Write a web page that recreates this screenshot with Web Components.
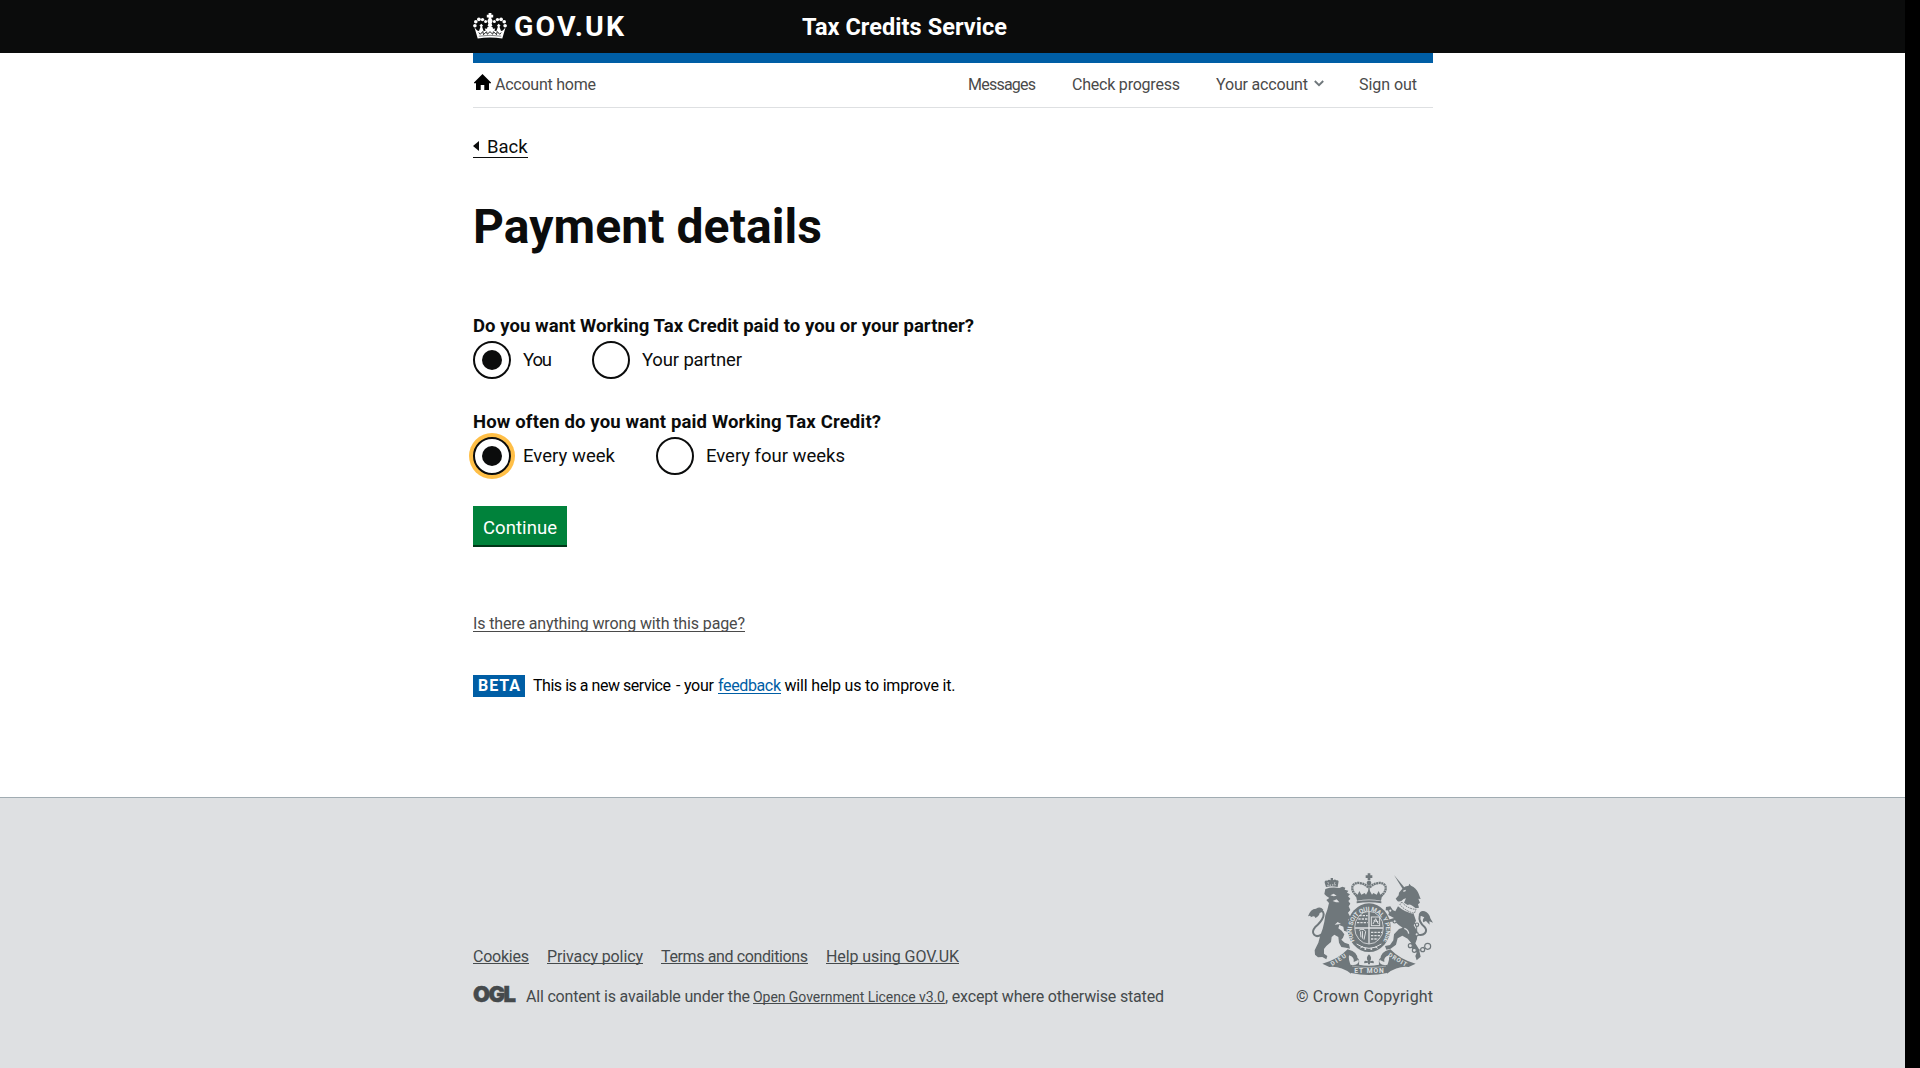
<!DOCTYPE html>
<html lang="en">
<head>
<meta charset="utf-8">
<title>Payment details</title>
<style>
html,body{margin:0;background:#000;height:1068px;overflow:hidden}
body{font-family:Roboto,"Liberation Sans",sans-serif;color:#0b0c0c;font-size:16px}
</style>
</head>
<body>
<tax-page></tax-page>
<script>
function define(name, markup) {
  const t = document.createElement('template');
  t.innerHTML = markup;
  customElements.define(name, class extends HTMLElement {
    constructor() {
      super();
      this.attachShadow({mode: 'open'}).append(t.content.cloneNode(true));
    }
  });
}

/* A run of text tracked to a set width (w), with an optional underline (u). */
customElements.define('tracked-text', class extends HTMLElement {
  constructor() {
    super();
    this.attachShadow({mode: 'open'}).innerHTML =
      `<style>:host{display:inline-block;white-space:pre;line-height:var(--lh,22px);height:20px;flex:none;position:relative}
       :host([u])::after{content:"";position:absolute;left:0;right:0;top:var(--u,17px);height:1px;background:currentColor}
       span{display:inline-block}</style><span><slot></slot></span>`;
  }
  connectedCallback() {
    requestAnimationFrame(() => this.fit());
    this.fit();
  }
  fit() {
    const s = this.shadowRoot.querySelector('span');
    const w = +this.getAttribute('w');
    const n = this.textContent.length;
    s.style.letterSpacing = '0';
    const natural = s.getBoundingClientRect().width;
    if (!natural || n < 2) return;
    s.style.letterSpacing = ((w - natural) / (n - 1)).toFixed(3) + 'px';
    this.style.width = w + 'px';
  }
});

define('crown-logo', `<style>:host{display:block;width:34px;height:26px;flex:none}svg{display:block}</style>
<svg width="34" height="26" viewBox="0 0 34 26" fill="#fff">
<path d="M15.6 0h2.8v1.8h1.8v2.6h-1.8V6h-2.8V4.4h-1.8V1.800h1.800z"/><circle cx="17" cy="8" r="2.500"/><path d="M15.800 9h2.400l1.200 4-2.400 1.500-2.400-1.500z"/>
<circle cx="12.600" cy="8.600" r="1.500"/><circle cx="9.500" cy="6.600" r="1.700"/><circle cx="5.900" cy="6.300" r="1.900"/><circle cx="2.800" cy="8.700" r="1.800"/><circle cx="1.900" cy="12.700" r="1.800"/>
<circle cx="21.400" cy="8.600" r="1.500"/><circle cx="24.500" cy="6.600" r="1.700"/><circle cx="28.100" cy="6.300" r="1.900"/><circle cx="31.200" cy="8.700" r="1.800"/><circle cx="32.100" cy="12.700" r="1.800"/>
<path d="M1.500 14.500l2.700 3 1.800.5 1.500-4.200-1-1.300 1.800-1.700 1.700 1.700-.9 1.300 1.600 4.500 2-.9-1-2 2.300.3.500-1.700h5l.5 1.700 2.300-.3-1 2 2 .9 1.600-4.500-.9-1.300 1.700-1.700 1.800 1.700-1 1.300L28 18l1.800-.5 2.700-3L29.300 25.500Q17 23.400 4.700 25.500z"/>
<path d="M5.800 19.500l1.500 1.800 2.500-2.800.7 3.200 3-3 .8 2.500 2.700-2.500 2.700 2.500.8-2.500 3 3 .7-3.200 2.500 2.800 1.500-1.800" fill="none" stroke="#0b0c0c" stroke-width=".9"/>
<path d="M5.800 23.200Q17 21.400 28.200 23.200" fill="none" stroke="#0b0c0c" stroke-width=".5"/>
</svg>`);

define('gov-header', `<style>
:host{display:block;background:#0b0c0c;height:53px;color:#fff;font-weight:700}
.row{width:960px;height:53px;margin:0 auto 0 473px;display:flex;align-items:flex-start}
crown-logo{margin:13px 0 0 0}
.gov{font-size:28.500px;margin:17px 0 0 7px}
.svc{font-size:23.500px;margin:17px 0 0 178px}
.row{--lh:20px}
</style><div class="row"><crown-logo></crown-logo><tracked-text class="gov" w="110">GOV.UK</tracked-text><tracked-text class="svc" w="205">Tax Credits Service</tracked-text></div>`);

define('account-nav', `<style>
:host{display:block;border-top:10px solid #005ea5;border-bottom:1px solid #dee0e2;height:44px;color:#4a4a4a}
nav{display:flex;height:44px;align-items:flex-start;padding-top:11px;box-sizing:border-box}
.home{margin:0 0 0 1px;flex:none}
.gap{flex:1}
.items{display:flex;padding-right:16px}
.chev{margin:6px 35px 0 6px;flex:none}
</style><nav><svg class="home" width="17" height="16" viewBox="0 0 17 16"><path fill="#000" d="M8.500 0L17 8.500v.7h-2V16h-4.700v-5H6.700v5H2V9.200H0v-.7z"/></svg>
<tracked-text style="margin-left:4px" w="101">Account home</tracked-text><div class="gap"></div>
<div class="items"><tracked-text w="68" style="margin-right:36px">Messages</tracked-text><tracked-text w="108" style="margin-right:36px">Check progress</tracked-text><tracked-text w="92">Your account</tracked-text><svg class="chev" width="10" height="7" viewBox="0 0 10 7"><path d="M.8 1L5 5.200 9.200 1" fill="none" stroke="#6f777b" stroke-width="1.900"/></svg><tracked-text w="58">Sign out</tracked-text></div></nav>`);

define('back-link', `<style>:host{display:flex;width:55px;height:20px;font-size:18.500px;border-bottom:1px solid #0b0c0c;--lh:20px}
svg{margin:4px 8px 0 0;flex:none}</style><svg width="6" height="10" viewBox="0 0 6 10"><path d="M0 5L6 0v10z" fill="#0b0c0c"/></svg><tracked-text w="41"><slot></slot></tracked-text>`);

define('radio-option', `<style>
:host{display:flex;height:38px;--lh:20px}
.c{width:38px;height:38px;box-sizing:border-box;border:2px solid #0b0c0c;border-radius:50%;background:#fff;display:flex;align-items:center;justify-content:center;flex:none}
.c i{display:none;width:20px;height:20px;border-radius:50%;background:#0b0c0c}
:host([checked]) .c i{display:block}
:host([focused]) .c{box-shadow:0 0 0 4px #ffbf47}
.l{margin:9px 0 0 12px;display:flex;padding-right:1px;font-size:18.500px}
</style><span class="c"><i></i></span><span class="l"><slot></slot></span>`);

define('radio-group', `<style>
:host{display:block}
.legend{display:flex;font-weight:700;font-size:18.500px;height:24px;--lh:18px}
.opts{display:flex;gap:var(--gap,40px)}
</style><div class="legend"><slot name="legend"></slot></div><div class="opts"><slot></slot></div>`);

define('submit-button', `<style>
:host{display:block;width:94px;height:41px;box-sizing:border-box;background:#00823b;border-bottom:2px solid #003618;color:#fff;font-size:18.500px;padding:11px 0 0 10px;--lh:20px}
</style><slot></slot>`);

define('beta-banner', `<style>
:host{display:flex;height:22px;color:#000;align-items:flex-start}
b{background:#005ea5;color:#fff;width:52px;height:22px;padding-left:5px;box-sizing:border-box;margin-right:8px}
.a{color:#005ea5;margin:0 3.500px 0 4px}
</style><b><tracked-text w="42">BETA</tracked-text></b><tracked-text w="138" style="margin-right:5px">This is a new service</tracked-text><tracked-text w="38">- your</tracked-text><tracked-text class="a" u w="63" style="--u:18px">feedback</tracked-text><tracked-text w="171">will help us to improve it.</tracked-text>`);

define('royal-crest', `<style>:host{display:block;width:125px;height:103px}svg{display:block;overflow:visible}</style>
<svg width="125" height="103" viewBox="84 38 375 309" fill="#6f777b">
<g id="crown"><path d="M263 39h8v6h6v8h-6v7h-8v-7h-6v-8h6z"/><circle cx="267" cy="68" r="7"/>
<path d="M265 70h4v40h-4z"/>
<path d="M231 108C205 84 219 66 238 68Q255 70 265 82M303 108C329 84 315 66 296 68Q279 70 269 82" fill="none" stroke="#6f777b" stroke-width="7" stroke-dasharray="6 1.500"/>
<path d="M226 97l7 6 5-11 6 11 10-5 4 5 9-16 9 16 4-5 10 5 6-11 5 11 7-6-5 24Q267 114 231 121z"/>
<path d="M230 123Q267 116 304 123v6Q267 123 230 129z"/></g>
<path d="M138 80l-4-13Q133 58 142 61Q146 56 152 60L152 53h7v7Q165 55 169 60Q178 58 175 68L173 80Q154 76 138 80z"/><path d="M142 75l28-2M143 67l6 3M162 69l6-3" stroke="#dee0e2" stroke-width="3" stroke-dasharray="4 3"/>
<path d="M136 86Q155 79 178 83L187 79 196 82 194 88 205 91 201 97 210 102 204 108 211 115 205 122 211 130 206 138 211 149 204 157 211 170 204 179 213 190 219 207 214 215 208 204 199 208 202 214 192 211 190 199 178 194 175 204 185 211 193 222 189 232 184 238 194 247 207 252 210 265 198 262 184 260 177 247 175 230 163 223 155 230 153 245 139 257 132 266 132 280 142 287 139 297 127 290 114 291 105 283 104 270 109 259 115 247 121 225 128 205 133 184 136 165 142 148 147 128 139 119 148 113 139 107 133 101z"/>
<path d="M151 105l10-5 9 6-9 2zM158 122l12-5 8 9-10 0zM164 193l9-8 10 6" fill="#dee0e2"/>
<path d="M125 222C105 236 91 218 105 201Q124 185 130 169Q134 149 119 153" fill="none" stroke="#6f777b" stroke-width="6"/>
<path d="M130 148Q121 137 108 145Q91 146 84 168Q94 163 92 171Q105 163 106 173Q118 167 119 158Q126 157 130 148z"/>
<path d="M342 44L374 82 368 86z"/><path d="M367 85Q375 76 386 76L388 70 393 76Q409 83 415 98L422 116 415 115 420 127 414 132 417 142 407 144Q390 128 383 134L372 127 378 114 371 116Q362 126 353 123L347 115 356 105 357 97z"/>
<path d="M365 125Q383 146 408 147L403 159Q377 153 360 133z" fill="none" stroke="#6f777b" stroke-width="3" stroke-dasharray="5 3"/>
<path d="M354 138Q374 156 401 161L408 181 401 195 412 213 411 236 406 249 417 267 422 289 410 300 406 287 410 277 396 262 393 247 383 235 367 226 353 234 348 253 332 265 319 268 315 257 330 254 340 240 342 222 357 206 368 202 357 195 344 183 329 185 330 199 321 194 323 179 342 173 325 164 329 151 317 150 318 140 331 138 338 149 346 153z"/>
<path d="M370 93l7-3M373 204Q385 208 386 220" fill="none" stroke="#dee0e2" stroke-width="4"/>
<path d="M411 222C432 229 446 214 433 199Q415 184 419 167Q423 155 434 158" fill="none" stroke="#6f777b" stroke-width="6"/>
<path d="M416 164Q420 149 434 153Q447 157 451 174L459 187 448 183 449 193 438 182 430 186Q426 178 433 171z"/>
<path d="M334 155L410 193V231L390 254L401 269L421 269L433 259" fill="none" stroke="#6f777b" stroke-width="3"/>
<g fill="#dee0e2" stroke="#6f777b" stroke-width="3.500"><circle cx="331" cy="151" r="5"/><circle cx="344" cy="183" r="5"/><circle cx="411" cy="193" r="5"/><circle cx="410" cy="222" r="5"/><circle cx="391" cy="256" r="6"/><circle cx="403" cy="270" r="6"/><circle cx="428" cy="268" r="6"/><circle cx="443" cy="258" r="9"/></g>
<ellipse cx="267" cy="202" rx="65" ry="73"/>
<ellipse cx="267" cy="202" rx="43" ry="49" fill="#6f777b" stroke="#dee0e2" stroke-width="2.500"/>
<path d="M267 154v96M225 203h84" stroke="#dee0e2" stroke-width="4"/>
<g stroke="#dee0e2" stroke-width="4" stroke-dasharray="7 3" fill="none"><path d="M235 176h28M231 187h32M238 166h25M273 216h33M273 226h29M273 236h22"/></g>
<g stroke="#dee0e2" stroke-width="3" fill="none"><rect x="274" y="170" width="25" height="26"/><path d="M279 191l8-16 8 16M281 181l14 3M237 210q14-8 20 4l-5 24M241 213l2 18M247 212l1 23"/></g>
<path id="garter" d="M224 242A51 58 0 1 1 310 242" fill="none"/>
<text font-size="19" font-weight="700" fill="#dee0e2" font-family="Roboto,sans-serif"><textPath href="#garter" textLength="237">HONI SOIT QUI MAL Y PENSE</textPath></text>
<path d="M230 251Q267 277 304 251M241 263l8-5M285 259l8 5" fill="none" stroke="#dee0e2" stroke-width="3"/><circle cx="256" cy="266" r="3" fill="#dee0e2"/><circle cx="274" cy="266" r="3" fill="#dee0e2"/>
<path d="M127 310Q172 299 203 267Q236 275 233 300L221 305Q224 290 207 285Q204 297 214 319L213 340Q181 316 148 320z"/>
<path d="M407 310Q362 299 331 267Q298 275 301 300L313 305Q310 290 327 285Q330 297 320 319L321 340Q353 316 386 320z"/>
<path d="M211 313Q233 318 237 301L222 290Q242 291 237 313Q267 319 297 313Q292 291 312 290L297 301Q301 318 323 313L321 338Q267 350 213 338z"/>
<path d="M216 317Q267 327 318 317" fill="none" stroke="#dee0e2" stroke-width="1.500"/>
<path d="M267 282Q278 293 270 303Q284 298 281 309L270 307v5h-6v-5l-11 2Q250 298 264 303Q256 293 267 282z"/>
<g font-size="18" font-weight="700" fill="#dee0e2" font-family="Roboto,sans-serif"><text transform="translate(157 317) rotate(-33)" textLength="51">DIEU</text><text x="223" y="338" font-size="20" textLength="88">ET MON</text><text transform="translate(323 287) rotate(31)" textLength="62">DROIT</text></g>
</svg>`);

define('gov-footer', `<style>
:host{display:block;background:#dee0e2;border-top:1px solid #a1acb2;height:270px;color:#454a4c}
.in{width:960px;margin-left:473px;padding-top:75px;display:flex;justify-content:space-between;box-sizing:border-box}
.left{padding-top:73px}
.links{display:flex;gap:18px;height:20px}
.lic{display:flex;margin-top:20px;height:20px}
.ogl{font-weight:900;font-size:22px;font-family:Inter,Roboto,sans-serif;-webkit-text-stroke:.5px #454a4c;margin:0 10px 0 0;--lh:17px}
.right{display:flex;flex-direction:column;align-items:flex-end}
.copy{margin-top:10px}
</style><div class="in"><div class="left"><div class="links"><tracked-text u w="56">Cookies</tracked-text><tracked-text u w="96">Privacy policy</tracked-text><tracked-text u w="147">Terms and conditions</tracked-text><tracked-text u w="133">Help using GOV.UK</tracked-text></div>
<div class="lic"><tracked-text class="ogl" w="43">OGL</tracked-text><tracked-text w="224">All content is available under the</tracked-text><tracked-text u w="192" style="font-size:14px;margin-left:3px;--lh:23px">Open Government Licence v3.0</tracked-text><tracked-text w="219">, except where otherwise stated</tracked-text></div></div>
<div class="right"><royal-crest></royal-crest><tracked-text class="copy" w="137">© Crown Copyright</tracked-text></div></div>`);

define('tax-page', `<style>
:host{display:flex;flex-direction:column;width:1905px;height:1068px;background:#fff}
main{width:960px;margin-left:473px;flex:1;display:flex;flex-direction:column;align-items:flex-start}
account-nav{width:960px}
back-link{margin-top:29px}
h1{margin:40px 0 0;font-size:48px;height:50px;--lh:50px}
</style>
<gov-header></gov-header>
<main><account-nav></account-nav>
<back-link>Back</back-link>
<h1><tracked-text w="349">Payment details</tracked-text></h1>
<radio-group style="margin-top:69px;--gap:39px"><tracked-text slot="legend" w="501">Do you want Working Tax Credit paid to you or your partner?</tracked-text>
<radio-option checked><tracked-text w="29">You</tracked-text></radio-option><radio-option><tracked-text w="100">Your partner</tracked-text></radio-option></radio-group>
<radio-group style="margin-top:34px"><tracked-text slot="legend" w="408">How often do you want paid Working Tax Credit?</tracked-text>
<radio-option checked focused><tracked-text w="92">Every week</tracked-text></radio-option><radio-option><tracked-text w="139">Every four weeks</tracked-text></radio-option></radio-group>
<submit-button style="margin-top:31px"><tracked-text w="74">Continue</tracked-text></submit-button>
<tracked-text u w="272" style="margin-top:67px;color:#4a4a4a;--lh:20px">Is there anything wrong with this page?</tracked-text>
<beta-banner style="margin-top:41px"></beta-banner></main>
<gov-footer></gov-footer>`);
</script>
</body>
</html>
